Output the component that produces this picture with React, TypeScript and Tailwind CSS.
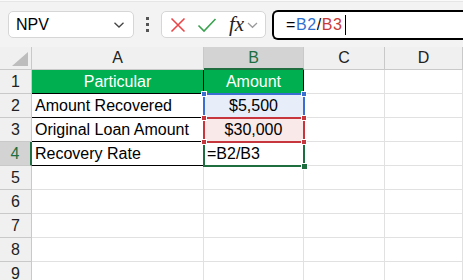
import React from "react";

const cellFont = { fontFamily: '"Liberation Sans", Arial, sans-serif' };

function Toolbar() {
  return (
    <div className="relative h-[47px] bg-[#f3f3f3]">
      <div className="h-[2px] bg-[#fafafa] border-b border-[#e6e6e6]" />
      <div className="flex items-center h-[45px] pt-[0px]">
        {/* Name box */}
        <div className="ml-[8px] w-[126px] h-[27px] bg-white border border-[#d6d6d6] rounded-[5px] flex items-center justify-between pl-[7px] pr-[8px]">
          <span className="text-[16px] text-black leading-none" style={cellFont}>NPV</span>
          <svg width="12" height="8" viewBox="0 0 12 8">
            <path d="M1.5 1.8 L6 6 L10.5 1.8" fill="none" stroke="#444" strokeWidth="1.3" />
          </svg>
        </div>
        {/* dots */}
        <div className="w-[27px] flex flex-col items-center gap-[3px]">
          <div className="w-[3px] h-[3px] bg-[#555]" />
          <div className="w-[3px] h-[3px] bg-[#555]" />
          <div className="w-[3px] h-[3px] bg-[#555]" />
        </div>
        {/* formula buttons */}
        <div className="w-[105px] h-[27px] bg-white border border-[#d6d6d6] rounded-[5px] flex items-center pl-[8px]">
          <svg width="16" height="16" viewBox="0 0 16 16">
            <path d="M1.5 1.5 L14.5 14.5 M14.5 1.5 L1.5 14.5" stroke="#e8474a" strokeWidth="1.6" fill="none" />
          </svg>
          <svg width="20" height="16" viewBox="0 0 20 16" className="ml-[11px]">
            <path d="M1.5 8.5 L7 14 L18.5 2" stroke="#3aa24f" strokeWidth="1.6" fill="none" />
          </svg>
          <span className="ml-[12px] text-[21px] italic text-[#222] leading-none" style={{ fontFamily: '"Liberation Serif", "Times New Roman", serif' }}>fx</span>
          <svg width="11" height="8" viewBox="0 0 11 8" className="ml-[3px]">
            <path d="M1 2 L5.5 6.3 L10 2" fill="none" stroke="#9a9a9a" strokeWidth="1.2" />
          </svg>
        </div>
        {/* formula bar */}
        <div className="ml-[6px] flex-1 h-[30px] bg-white border-2 border-black rounded-l-[6px] border-r-0 flex items-center pl-[12px]">
          <span className="text-[16px] leading-none tracking-[0.6px]" style={cellFont}>
            <span className="text-black">=</span>
            <span className="text-[#2f6fd0]">B2</span>
            <span className="text-black">/</span>
            <span className="text-[#c73a3a]">B3</span>
          </span>
          <div className="ml-[2px] w-[1px] h-[20px] bg-black" />
        </div>
      </div>
    </div>
  );
}

const hdr = "bg-[#f0f0f0] border-r border-b border-[#c9c9c9] flex items-center justify-center text-[16px] text-[#222]";
const grid = "border-r border-b border-[#e1e1e1]";

export default function App() {
  const rowNums = [1, 2, 3, 4, 5, 6, 7, 8, 9];
  return (
    <div className="w-[463px] h-[280px] overflow-hidden bg-white" style={cellFont}>
      <Toolbar />
      <div className="relative grid grid-cols-[32px_172px_100px_81px_78px] grid-rows-[23px_repeat(9,24px)]">
        {/* header row */}
        <div className={`${hdr} relative`}>
          <svg width="16" height="14" viewBox="0 0 16 14" className="absolute right-[3px] bottom-[3px]">
            <path d="M16 0 L16 14 L0 14 Z" fill="#bdbdbd" />
          </svg>
        </div>
        <div className={hdr}>A</div>
        <div className="bg-[#d3d3d3] border-r border-[#c9c9c9] border-b-2 border-b-[#1e6e3f] flex items-center justify-center text-[16px] text-[#1e6e3f]">B</div>
        <div className={hdr}>C</div>
        <div className={hdr}>D</div>

        {rowNums.map((n) => {
          const isSel = n === 4;
          const rowHdr = isSel
            ? "bg-[#d3d3d3] border-b border-[#c9c9c9] border-r-2 border-r-[#1e6e3f] text-[#1e6e3f] flex items-center justify-center text-[16px]"
            : hdr;
          let a: React.ReactNode = null;
          let b: React.ReactNode = null;
          let aCls = grid;
          let bCls = grid;
          if (n === 1) {
            aCls = "bg-[#00b050] border-r border-b border-black flex items-center justify-center text-white text-[16px]";
            bCls = "bg-[#00b050] border-r border-b border-black flex items-center justify-center text-white text-[16px]";
            a = "Particular";
            b = "Amount";
          } else if (n >= 2 && n <= 4) {
            aCls = "border-r border-b border-black flex items-center pl-[3px] text-[16px] text-black";
            a = n === 2 ? "Amount Recovered" : n === 3 ? "Original Loan Amount" : "Recovery Rate";
            if (n === 2) {
              bCls = "bg-[#e8eef9] border-r border-b border-black flex items-center justify-center text-[16px] text-black";
              b = "$5,500";
            } else if (n === 3) {
              bCls = "bg-[#fae9e9] border-r border-b border-black flex items-center justify-center text-[16px] text-black";
              b = "$30,000";
            } else {
              bCls = "border-r border-b border-black flex items-center pl-[3px] text-[16px] text-black";
              b = "=B2/B3";
            }
          }
          return (
            <React.Fragment key={n}>
              <div className={rowHdr}>{n}</div>
              <div className={`${aCls} whitespace-nowrap`}>{a}</div>
              <div className={`${bCls} whitespace-nowrap`}>{b}</div>
              <div className={grid} />
              <div className={grid} />
            </React.Fragment>
          );
        })}

        {/* selection overlays */}
        <div className="absolute left-[203px] top-[46px] w-[102px] h-[25px] border-2 border-b-0 border-[#3a6fd1] pointer-events-none" />
        <div className="absolute left-[203px] top-[70px] w-[102px] h-[26px] border-2 border-[#c7363d] pointer-events-none" />
        <div className="absolute left-[203px] top-[95px] w-[102px] h-[25px] border-2 border-t-0 border-[#1e6e3f] pointer-events-none" />
        <div className="absolute left-[201px] top-[44px] w-[6px] h-[6px] bg-[#3a6fd1] border border-white" />
        <div className="absolute left-[301px] top-[44px] w-[6px] h-[6px] bg-[#3a6fd1] border border-white" />
        <div className="absolute left-[201px] top-[68px] w-[6px] h-[6px] bg-[#c7363d] border border-white" />
        <div className="absolute left-[301px] top-[68px] w-[6px] h-[6px] bg-[#c7363d] border border-white" />
        <div className="absolute left-[201px] top-[92px] w-[6px] h-[6px] bg-[#c7363d] border border-white" />
        <div className="absolute left-[301px] top-[92px] w-[6px] h-[6px] bg-[#c7363d] border border-white" />
        <div className="absolute left-[301px] top-[116px] w-[7px] h-[7px] bg-[#1e6e3f] border border-white" />
      </div>
    </div>
  );
}
